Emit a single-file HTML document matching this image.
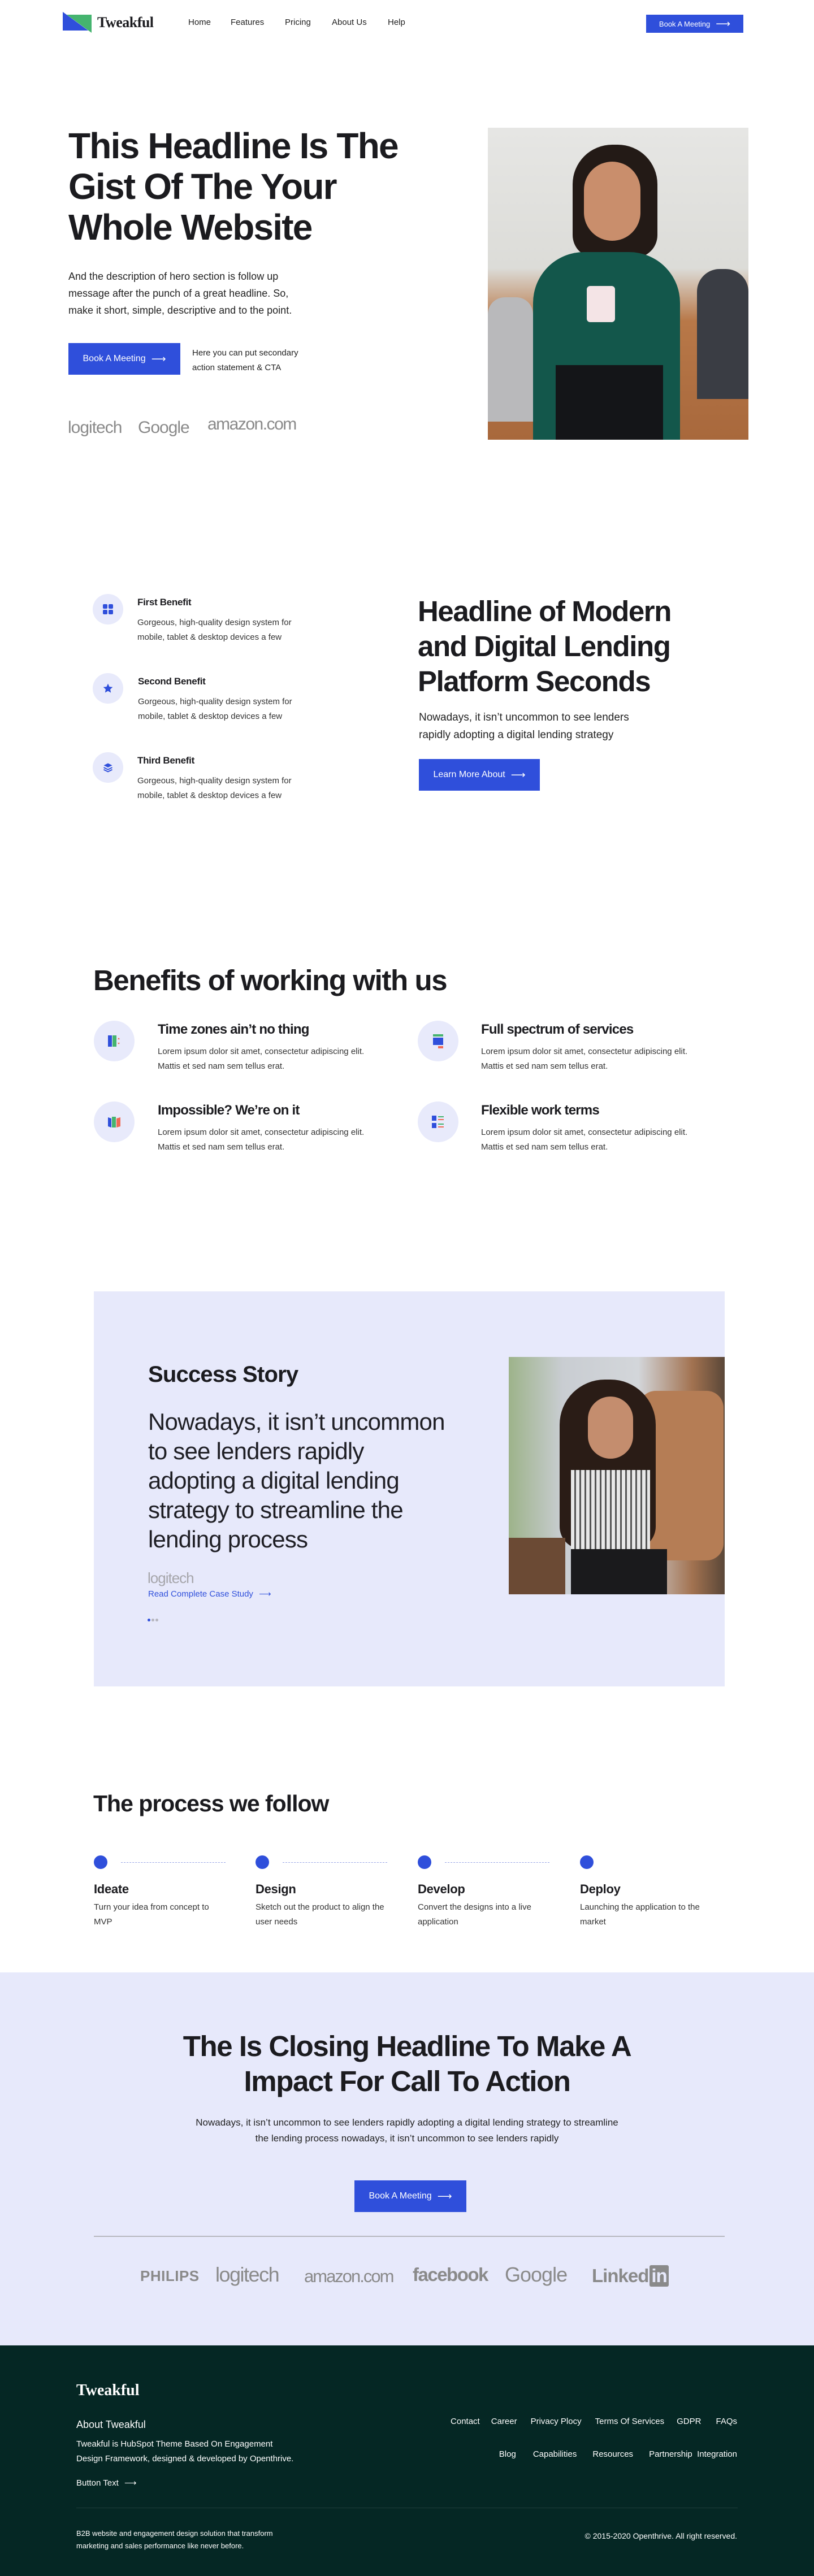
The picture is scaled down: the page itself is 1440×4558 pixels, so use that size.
<!DOCTYPE html>
<html><head><meta charset="utf-8">
<style>
*{margin:0;padding:0;box-sizing:border-box}
body{width:1440px;height:4558px;position:relative;background:#fff;font-family:"Liberation Sans",Arial,sans-serif;color:#1b1b1f;overflow:hidden}
.a{position:absolute}
.btn{position:absolute;background:#2f4fdb;color:#fff;display:flex;align-items:center;justify-content:center;font-size:15px}
.btn span.ar{margin-left:10px;font-size:18px}
.h{font-weight:700;letter-spacing:-1.2px}
.nav{font-size:15px;color:#222;top:31px}
.circ{position:absolute;border-radius:50%;background:#e8eafb;display:flex;align-items:center;justify-content:center}
.bt{font-size:16px;font-weight:700;letter-spacing:-.3px}
.bd{font-size:15px;line-height:26px;color:#333}
.logo{color:#8a8a8a;font-weight:700;white-space:nowrap}
</style></head><body>

<!-- NAV -->
<svg class="a" style="left:111px;top:21px" width="52" height="38"><polygon points="7,5 51,5 51,37" fill="#45b46f"/><polygon points="0,0 0,33 45,33" fill="#2f4fdb"/></svg>
<div class="a" style="left:172px;top:25px;font-family:'Liberation Serif',serif;font-weight:700;font-size:26px;letter-spacing:-.5px">Tweakful</div>
<div class="a nav" style="left:333px">Home</div>
<div class="a nav" style="left:408px">Features</div>
<div class="a nav" style="left:504px">Pricing</div>
<div class="a nav" style="left:587px">About Us</div>
<div class="a nav" style="left:686px">Help</div>
<div class="btn" style="left:1143px;top:26px;width:172px;height:32px;font-size:13px">Book A Meeting<span class="ar">⟶</span></div>

<!-- HERO -->
<div class="a h" style="left:121px;top:222px;font-size:64px;line-height:72px;width:720px;letter-spacing:-1.8px">This Headline Is The<br>Gist Of The Your<br>Whole Website</div>
<div class="a" style="left:121px;top:474px;font-size:18px;line-height:30px;width:470px;color:#222">And the description of hero section is follow up<br>message after the punch of a great headline. So,<br>make it short, simple, descriptive and to the point.</div>
<div class="btn" style="left:121px;top:607px;width:198px;height:56px;font-size:16px">Book A Meeting<span class="ar">⟶</span></div>
<div class="a" style="left:340px;top:612px;font-size:15px;line-height:26px;width:220px;color:#222">Here you can put secondary<br>action statement &amp; CTA</div>
<div class="a logo" style="left:120px;top:740px;font-size:30px;font-weight:400;letter-spacing:-1px">logitech</div>
<div class="a logo" style="left:244px;top:740px;font-size:30px;font-weight:400;letter-spacing:-1px">Google</div>
<div class="a logo" style="left:367px;top:734px;font-size:30px;font-weight:400;letter-spacing:-1.5px">amazon.com</div>
<div class="a" style="left:863px;top:226px;width:461px;height:552px;background:linear-gradient(180deg,#e6e6e4 0%,#dcdcd8 45%,#b87848 62%,#a8683c 100%);overflow:hidden">
  <div class="a" style="left:0;top:300px;width:80px;height:220px;background:#b9b9bb;border-radius:30px 30px 0 0"></div>
  <div class="a" style="left:370px;top:250px;width:91px;height:230px;background:#3a3d44;border-radius:40px 40px 0 0"></div>
  <div class="a" style="left:150px;top:30px;width:150px;height:200px;background:#231a16;border-radius:70px 70px 40px 40px"></div>
  <div class="a" style="left:170px;top:60px;width:100px;height:140px;background:#c98e6c;border-radius:50px"></div>
  <div class="a" style="left:80px;top:220px;width:260px;height:340px;background:#13574b;border-radius:90px 90px 0 0"></div>
  <div class="a" style="left:120px;top:420px;width:190px;height:140px;background:#141518"></div>
  <div class="a" style="left:175px;top:280px;width:50px;height:64px;background:#f4e4e6;border-radius:6px"></div>
</div>

<!-- BENEFITS SPLIT -->
<div class="circ" style="left:164px;top:1051px;width:54px;height:54px"><svg width="18" height="18"><rect x="0" y="0" width="8" height="8" rx="2" fill="#2f4fdb"/><rect x="10" y="0" width="8" height="8" rx="2" fill="#2f4fdb"/><rect x="0" y="10" width="8" height="8" rx="2" fill="#2f4fdb"/><rect x="10" y="10" width="8" height="8" rx="2" fill="#2f4fdb"/></svg></div>
<div class="a bt" style="left:243px;top:1056px;font-size:17px">First Benefit</div>
<div class="a bd" style="left:243px;top:1089px;width:330px">Gorgeous, high-quality design system for<br>mobile, tablet &amp; desktop devices a few</div>
<div class="circ" style="left:164px;top:1191px;width:54px;height:54px"><svg width="20" height="20" viewBox="0 0 24 24"><path d="M12 2l3 6.5 7 .8-5.2 4.8 1.4 7L12 17.6 5.8 21l1.4-7L2 9.3l7-.8z" fill="#2f4fdb"/></svg></div>
<div class="a bt" style="left:244px;top:1196px;font-size:17px">Second Benefit</div>
<div class="a bd" style="left:244px;top:1229px;width:330px">Gorgeous, high-quality design system for<br>mobile, tablet &amp; desktop devices a few</div>
<div class="circ" style="left:164px;top:1331px;width:54px;height:54px"><svg width="18" height="18" viewBox="0 0 24 24"><path d="M12 2l10 5-10 5L2 7z" fill="#2f4fdb"/><path d="M2 12l10 5 10-5M2 17l10 5 10-5" stroke="#2f4fdb" stroke-width="2.5" fill="none"/></svg></div>
<div class="a bt" style="left:243px;top:1336px;font-size:17px">Third Benefit</div>
<div class="a bd" style="left:243px;top:1369px;width:330px">Gorgeous, high-quality design system for<br>mobile, tablet &amp; desktop devices a few</div>

<div class="a h" style="left:739px;top:1051px;font-size:51px;line-height:62px;width:600px;letter-spacing:-1.4px">Headline of Modern<br>and Digital Lending<br>Platform Seconds</div>
<div class="a" style="left:741px;top:1254px;font-size:19px;line-height:31px;width:460px;color:#222">Nowadays, it isn’t uncommon to see lenders<br>rapidly adopting a digital lending strategy</div>
<div class="btn" style="left:741px;top:1343px;width:214px;height:56px;font-size:16px">Learn More About<span class="ar">⟶</span></div>

<!-- BENEFITS OF WORKING -->
<div class="a h" style="left:165px;top:1705px;font-size:51px;letter-spacing:-1.4px">Benefits of working with us</div>
<div class="circ" style="left:166px;top:1806px;width:72px;height:72px"><svg width="26" height="26"><rect x="2" y="3" width="7" height="20" fill="#2f4fdb"/><rect x="10" y="3" width="7" height="20" fill="#45b46f"/><path d="M21 7l2 3h-4zM21 19l2-3h-4z" fill="#f06a55"/></svg></div>
<div class="a" style="left:279px;top:1808px;font-size:24px;font-weight:700;letter-spacing:-.8px">Time zones ain’t no thing</div>
<div class="a bd" style="left:279px;top:1848px;width:460px">Lorem ipsum dolor sit amet, consectetur adipiscing elit.<br>Mattis et sed nam sem tellus erat.</div>
<div class="circ" style="left:739px;top:1806px;width:72px;height:72px"><svg width="24" height="26"><rect x="3" y="1" width="18" height="4" fill="#45b46f"/><rect x="3" y="7" width="18" height="13" fill="#2f4fdb"/><rect x="12" y="22" width="9" height="4" fill="#f06a55"/></svg></div>
<div class="a" style="left:851px;top:1808px;font-size:24px;font-weight:700;letter-spacing:-.8px">Full spectrum of services</div>
<div class="a bd" style="left:851px;top:1848px;width:460px">Lorem ipsum dolor sit amet, consectetur adipiscing elit.<br>Mattis et sed nam sem tellus erat.</div>
<div class="circ" style="left:166px;top:1949px;width:72px;height:72px"><svg width="26" height="24"><path d="M2 4l6 2v16l-6-2z" fill="#2f4fdb"/><path d="M9 3h7v19H9z" fill="#45b46f"/><path d="M17 6l7-2v16l-7 2z" fill="#f06a55"/></svg></div>
<div class="a" style="left:279px;top:1951px;font-size:24px;font-weight:700;letter-spacing:-.8px">Impossible? We’re on it</div>
<div class="a bd" style="left:279px;top:1991px;width:460px">Lorem ipsum dolor sit amet, consectetur adipiscing elit.<br>Mattis et sed nam sem tellus erat.</div>
<div class="circ" style="left:739px;top:1949px;width:72px;height:72px"><svg width="22" height="24"><rect x="0" y="1" width="8" height="9" fill="#2f4fdb"/><rect x="0" y="14" width="8" height="9" fill="#2f4fdb"/><rect x="11" y="2" width="10" height="2" fill="#45b46f"/><rect x="11" y="7" width="10" height="2" fill="#f06a55"/><rect x="11" y="15" width="10" height="2" fill="#45b46f"/><rect x="11" y="20" width="10" height="2" fill="#f06a55"/></svg></div>
<div class="a" style="left:851px;top:1951px;font-size:24px;font-weight:700;letter-spacing:-.8px">Flexible work terms</div>
<div class="a bd" style="left:851px;top:1991px;width:460px">Lorem ipsum dolor sit amet, consectetur adipiscing elit.<br>Mattis et sed nam sem tellus erat.</div>

<!-- SUCCESS STORY -->
<div class="a" style="left:166px;top:2285px;width:1116px;height:699px;background:#e7e9fb"></div>
<div class="a h" style="left:262px;top:2410px;font-size:40px;letter-spacing:-.8px">Success Story</div>
<div class="a" style="left:262px;top:2490px;font-size:42px;line-height:52px;width:620px;letter-spacing:-.8px;color:#1f1f25">Nowadays, it isn’t uncommon<br>to see lenders rapidly<br>adopting a digital lending<br>strategy to streamline the<br>lending process</div>
<div class="a" style="left:261px;top:2777px;font-size:26px;color:#a6a6ab;letter-spacing:-1px">logitech</div>
<div class="a" style="left:262px;top:2811px;font-size:15px;color:#2f4fdb">Read Complete Case Study <span style="margin-left:6px">⟶</span></div>
<div class="a" style="left:261px;top:2864px;width:5px;height:5px;border-radius:50%;background:#2f4fdb"></div>
<div class="a" style="left:268px;top:2864px;width:5px;height:5px;border-radius:50%;background:#b5b5bd"></div>
<div class="a" style="left:275px;top:2864px;width:5px;height:5px;border-radius:50%;background:#b5b5bd"></div>
<div class="a" style="left:900px;top:2401px;width:382px;height:420px;background:linear-gradient(90deg,#9db38a 0%,#c9cdd2 25%,#d3d6da 60%,#a27250 85%,#5a4738 100%);overflow:hidden">
  <div class="a" style="left:230px;top:60px;width:150px;height:300px;background:#b57d55;border-radius:30px"></div>
  <div class="a" style="left:90px;top:40px;width:170px;height:300px;background:#2a1c16;border-radius:80px 80px 40px 40px"></div>
  <div class="a" style="left:140px;top:70px;width:80px;height:110px;background:#c48d6e;border-radius:40px"></div>
  <div class="a" style="left:110px;top:200px;width:140px;height:180px;background:repeating-linear-gradient(90deg,#e8e8e8 0 6px,#555 6px 9px)"></div>
  <div class="a" style="left:110px;top:340px;width:170px;height:80px;background:#1a1a1c"></div>
  <div class="a" style="left:0;top:320px;width:100px;height:100px;background:#6b4a34"></div>
</div>

<!-- PROCESS -->
<div class="a h" style="left:165px;top:3168px;font-size:41px;letter-spacing:-1px">The process we follow</div>
<div class="a" style="left:166px;top:3283px;width:24px;height:24px;border-radius:50%;background:#2f4fdb"></div>
<div class="a" style="left:214px;top:3295px;width:185px;border-top:1.5px dashed #9aa6e6"></div>
<div class="a" style="left:452px;top:3283px;width:24px;height:24px;border-radius:50%;background:#2f4fdb"></div>
<div class="a" style="left:500px;top:3295px;width:185px;border-top:1.5px dashed #9aa6e6"></div>
<div class="a" style="left:739px;top:3283px;width:24px;height:24px;border-radius:50%;background:#2f4fdb"></div>
<div class="a" style="left:787px;top:3295px;width:185px;border-top:1.5px dashed #9aa6e6"></div>
<div class="a" style="left:1026px;top:3283px;width:24px;height:24px;border-radius:50%;background:#2f4fdb"></div>
<div class="a bt" style="left:166px;top:3330px;font-size:22px">Ideate</div>
<div class="a bd" style="left:166px;top:3362px;width:260px;font-size:15px">Turn your idea from concept to<br>MVP</div>
<div class="a bt" style="left:452px;top:3330px;font-size:22px">Design</div>
<div class="a bd" style="left:452px;top:3362px;width:270px;font-size:15px">Sketch out the product to align the<br>user needs</div>
<div class="a bt" style="left:739px;top:3330px;font-size:22px">Develop</div>
<div class="a bd" style="left:739px;top:3362px;width:260px;font-size:15px">Convert the designs into a live<br>application</div>
<div class="a bt" style="left:1026px;top:3330px;font-size:22px">Deploy</div>
<div class="a bd" style="left:1026px;top:3362px;width:260px;font-size:15px">Launching the application to the<br>market</div>

<!-- CTA -->
<div class="a" style="left:0;top:3490px;width:1440px;height:660px;background:#e7e9fb"></div>
<div class="a h" style="left:0;top:3590px;width:1440px;text-align:center;font-size:51px;line-height:62px;letter-spacing:-1.4px">The Is Closing Headline To Make A<br>Impact For Call To Action</div>
<div class="a" style="left:200px;top:3742px;width:1040px;text-align:center;font-size:17px;line-height:28px;color:#222">Nowadays, it isn’t uncommon to see lenders rapidly adopting a digital lending strategy to streamline<br>the lending process nowadays, it isn’t uncommon to see lenders rapidly</div>
<div class="btn" style="left:627px;top:3858px;width:198px;height:56px;font-size:16px">Book A Meeting<span class="ar">⟶</span></div>
<div class="a" style="left:166px;top:3956px;width:1116px;height:2px;background:#b8b8bf"></div>
<div class="a logo" style="left:248px;top:4012px;font-size:26px;letter-spacing:.5px">PHILIPS</div>
<div class="a logo" style="left:381px;top:4004px;font-size:36px;font-weight:400;letter-spacing:-1.5px">logitech</div>
<div class="a logo" style="left:538px;top:4010px;font-size:31px;font-weight:400;letter-spacing:-2px">amazon.com</div>
<div class="a logo" style="left:730px;top:4006px;font-size:33px;letter-spacing:-1.5px">facebook</div>
<div class="a logo" style="left:893px;top:4004px;font-size:36px;font-weight:400;letter-spacing:-1px">Google</div>
<div class="a logo" style="left:1047px;top:4008px;font-size:33px;letter-spacing:-1px">Linked<span style="display:inline-block;background:#8a8a8a;color:#e7e9fb;padding:0 3px;border-radius:3px;margin-left:2px">in</span></div>

<!-- FOOTER -->
<div class="a" style="left:0;top:4150px;width:1440px;height:408px;background:#052724"></div>
<div class="a" style="left:135px;top:4214px;font-family:'Liberation Serif',serif;font-weight:700;font-size:28px;color:#fff">Tweakful</div>
<div class="a" style="left:135px;top:4280px;font-size:18px;color:#fff">About Tweakful</div>
<div class="a" style="left:135px;top:4312px;font-size:15px;line-height:26px;color:#fff;width:460px">Tweakful is HubSpot Theme Based On Engagement<br>Design Framework, designed &amp; developed by Openthrive.</div>
<div class="a" style="left:135px;top:4384px;font-size:15px;color:#fff">Button Text <span style="margin-left:6px">⟶</span></div>
<div class="a" style="right:136px;top:4276px;font-size:15px;color:#fff;white-space:nowrap"><span style="margin-right:20px">Contact</span><span style="margin-right:24px">Career</span><span style="margin-right:24px">Privacy Plocy</span><span style="margin-right:22px">Terms Of Services</span><span style="margin-right:26px">GDPR</span><span>FAQs</span></div>
<div class="a" style="right:136px;top:4334px;font-size:15px;color:#fff;white-space:nowrap"><span style="margin-right:30px">Blog</span><span style="margin-right:28px">Capabilities</span><span style="margin-right:28px">Resources</span><span>Partnership&nbsp; Integration</span></div>
<div class="a" style="left:135px;top:4437px;width:1170px;height:1px;background:#1f3e3a"></div>
<div class="a" style="left:135px;top:4472px;font-size:13px;line-height:22px;color:#fff;width:440px">B2B website and engagement design solution that transform<br>marketing and sales performance like never before.</div>
<div class="a" style="right:136px;top:4479px;font-size:14px;color:#fff">© 2015-2020 Openthrive. All right reserved.</div>

</body></html>
